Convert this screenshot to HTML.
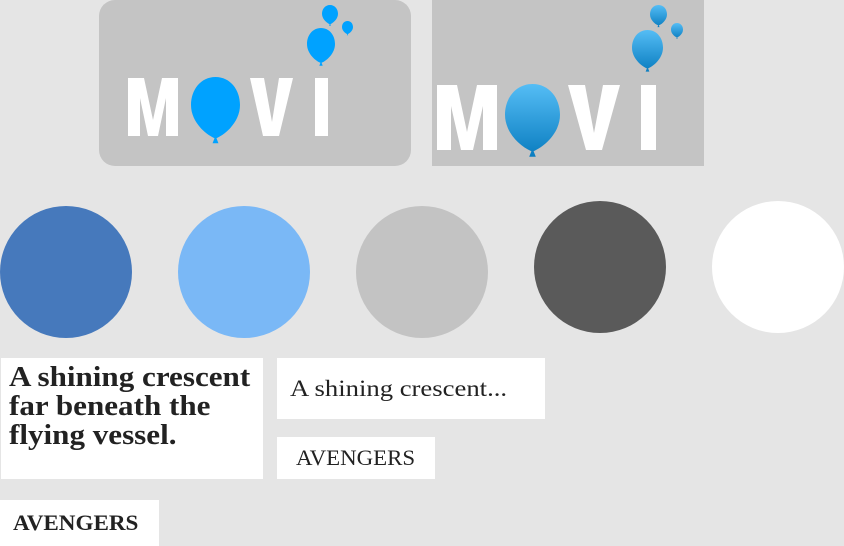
<!DOCTYPE html>
<html><head><meta charset="utf-8">
<style>
*{margin:0;padding:0;box-sizing:border-box}
html,body{width:844px;height:546px;background:#e5e5e5;overflow:hidden;position:relative;font-family:"Liberation Serif",serif;color:#222}
.abs{position:absolute}
.c{position:absolute;width:132px;height:132px;border-radius:50%}
.box{position:absolute;background:#fff}
.sx{display:inline-block;transform-origin:0 0;white-space:nowrap}
</style></head><body>
<svg class="abs" style="left:0;top:0" width="844" height="170">
<defs>
<linearGradient id="g" x1="0" y1="0" x2="0" y2="1"><stop offset="0" stop-color="#55bdf5"/><stop offset="1" stop-color="#0a7dc0"/></linearGradient>
<g id="bal"><path d="M50 0 C80 0 100 25 100 55 C100 85 75 110 52 120 L56 130 L44 130 L48 120 C25 110 0 85 0 55 C0 25 20 0 50 0Z"/></g>
</defs>
<rect x="99" y="0" width="312" height="166" rx="16" fill="#c4c4c4"/>
<g fill="#fff">
<path d="M128 78h16l9 42l9 -42h16v58h-12v-38l-8 38h-10l-8-38v38h-12z"/>
<path d="M250 78h14l8 44l7-44h14l-14 58h-16z"/>
<rect x="315" y="78" width="13" height="58"/>
</g>
<g fill="#00a2ff">
<use href="#bal" transform="translate(191,77) scale(0.49,0.51)"/>
<use href="#bal" transform="translate(307,28) scale(0.28,0.29)"/>
<use href="#bal" transform="translate(322,5) scale(0.16,0.16)"/>
<use href="#bal" transform="translate(342,21) scale(0.11,0.11)"/>
</g>
<rect x="432" y="0" width="272" height="166" fill="#c4c4c4"/>
<g fill="#fff">
<path d="M437 85h20l10 47l10 -47h20v65h-14v-44l-10 44h-12l-10-44v44h-14z"/>
<path d="M568 85h17l9 48l9-48h17l-18 65h-16z"/>
<rect x="641" y="85" width="15" height="65"/>
</g>
<g fill="url(#g)">
<use href="#bal" transform="translate(505,84) scale(0.55,0.56)"/>
<use href="#bal" transform="translate(632,30) scale(0.31,0.32)"/>
<use href="#bal" transform="translate(650,5) scale(0.17,0.17)"/>
<use href="#bal" transform="translate(671,23) scale(0.12,0.12)"/>
</g>
</svg>
<div class="c" style="left:0;top:206px;background:#4679bc"></div>
<div class="c" style="left:178px;top:206px;background:#7ab8f6"></div>
<div class="c" style="left:356px;top:206px;background:#c3c3c3"></div>
<div class="c" style="left:534px;top:201px;background:#5a5a5a"></div>
<div class="c" style="left:712px;top:201px;background:#fff"></div>
<div class="box" style="left:1px;top:358px;width:262px;height:121px;padding:5px 0 0 8px;font-weight:bold;font-size:28px;line-height:29px"><span class="sx" style="transform:scaleX(1.11)">A shining crescent<br>far beneath the<br>flying vessel.</span></div>
<div class="box" style="left:277px;top:358px;width:268px;height:61px;padding:18px 0 0 13px;font-size:23px"><span class="sx" style="transform:scaleX(1.16)">A shining crescent...</span></div>
<div class="box" style="left:277px;top:437px;width:158px;height:42px;padding:8px 0 0 19px;font-size:22px"><span class="sx" style="transform:scaleX(1.04)">AVENGERS</span></div>
<div class="box" style="left:0;top:500px;width:159px;height:46px;padding:10px 0 0 13px;font-size:22px;font-weight:bold"><span class="sx" style="transform:scaleX(1.05)">AVENGERS</span></div>
</body></html>
